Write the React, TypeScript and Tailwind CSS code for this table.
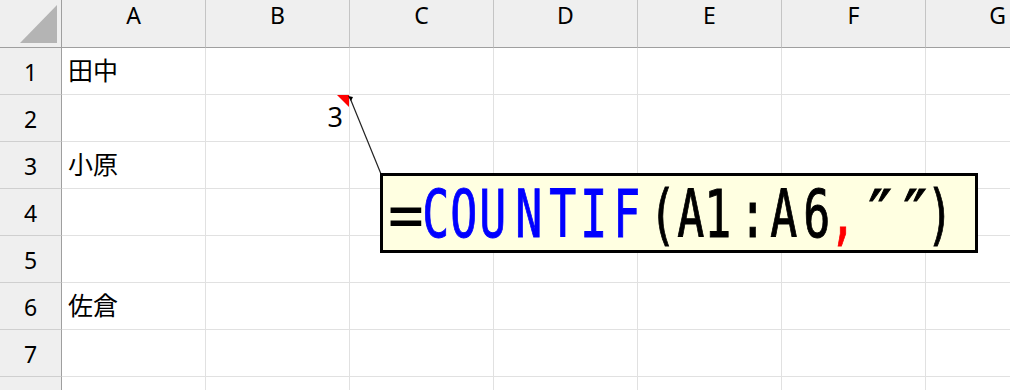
import React from "react";

const cols = ["A", "B", "C", "D", "E", "F", "G"];
const rows = [1, 2, 3, 4, 5, 6, 7, 8];

const cellText: Record<string, string> = { A1: "田中", A3: "小原", A6: "佐倉" };

type Ch = { c: string; color: string; ml: string; sx: string; font?: string };
const chars: Ch[] = [
  { c: "=", color: "text-black", ml: "ml-[5px]", sx: "scale-x-[0.9] [-webkit-text-stroke-width:0px]" },
  { c: "C", color: "text-[#0000ff]", ml: "ml-[8px]", sx: "scale-x-[0.68]" },
  { c: "O", color: "text-[#0000ff]", ml: "ml-[6px]", sx: "scale-x-[0.68]" },
  { c: "U", color: "text-[#0000ff]", ml: "ml-[7px]", sx: "scale-x-[0.68]" },
  { c: "N", color: "text-[#0000ff]", ml: "ml-[14px]", sx: "scale-x-[0.68]" },
  { c: "T", color: "text-[#0000ff]", ml: "ml-[12px]", sx: "scale-x-[0.68]" },
  { c: "I", color: "text-[#0000ff]", ml: "ml-[9px]", sx: "scale-x-[0.68]" },
  { c: "F", color: "text-[#0000ff]", ml: "ml-[11px]", sx: "scale-x-[0.68]" },
  { c: "(", color: "text-black", ml: "ml-[14px]", sx: "scale-x-[0.68]" },
  { c: "A", color: "text-black", ml: "ml-[6px]", sx: "scale-x-[0.68]" },
  { c: "1", color: "text-black", ml: "ml-[5px]", sx: "scale-x-[0.68]" },
  { c: ":", color: "text-black", ml: "ml-[13px]", sx: "scale-x-[0.68]" },
  { c: "A", color: "text-black", ml: "ml-[9px]", sx: "scale-x-[0.68]" },
  { c: "6", color: "text-black", ml: "ml-[11px]", sx: "scale-x-[0.68]" },
  { c: ",", color: "text-[#ff0000]", ml: "ml-[4px]", sx: "scale-x-[0.68]" },
  { c: "″", color: "text-black", ml: "ml-[15px]", sx: "scale-x-[0.95]", font: "font-['DejaVu_Sans',sans-serif]" },
  { c: "″", color: "text-black", ml: "ml-[13px]", sx: "scale-x-[0.95]", font: "font-['DejaVu_Sans',sans-serif]" },
  { c: ")", color: "text-black", ml: "ml-[3px]", sx: "scale-x-[0.68]" },
];

export default function App() {
  return (
    <div className="relative w-[1010px] h-[390px] overflow-hidden bg-white">
      <div className="grid grid-cols-[62px_repeat(7,144px)] grid-rows-[48px_repeat(8,47px)]">
        {/* corner */}
        <div className="relative bg-[#efefef] border-r border-b border-[#9f9f9f]">
          <svg className="absolute left-0 top-0" width="61" height="47" viewBox="0 0 61 47">
            <polygon points="20,43 57,43 57,5" fill="#b4b4b4" />
          </svg>
        </div>
        {cols.map((c) => (
          <div
            key={c}
            className="flex justify-center pt-[4px] bg-[#efefef] border-r border-r-[#c4c4c4] border-b border-b-[#9f9f9f] font-['Noto_Sans',sans-serif] text-[23px] leading-none text-black"
          >
            {c}
          </div>
        ))}
        {rows.map((r) => (
          <React.Fragment key={r}>
            <div className="flex justify-center pt-[13px] bg-[#efefef] border-r border-r-[#9f9f9f] border-b border-b-[#cfcfcf] font-['Noto_Sans',sans-serif] text-[23px] leading-none text-black">
              {r < 8 ? r : null}
            </div>
            {cols.map((c) => {
              const id = `${c}${r}`;
              const t = cellText[id];
              if (id === "B2") {
                return (
                  <div key={id} className="relative flex items-start justify-end pr-[6px] pt-[8px] border-r border-b border-[#e1e1e1]">
                    <span className="font-['Noto_Sans',sans-serif] text-[27px] leading-none text-black">3</span>
                    <svg className="absolute right-0 top-0" width="12" height="12" viewBox="0 0 12 12">
                      <polygon points="0,0 12,0 12,12" fill="#ff0000" />
                    </svg>
                  </div>
                );
              }
              return (
                <div key={id} className="flex items-start pl-[6px] pt-[9px] border-r border-b border-[#e1e1e1]">
                  {t && (
                    <span className="font-['Noto_Sans_CJK_JP',sans-serif] text-[25px] leading-none text-black">{t}</span>
                  )}
                </div>
              );
            })}
          </React.Fragment>
        ))}
      </div>

      {/* connector line */}
      <svg className="absolute left-[345px] top-[92px]" width="40" height="85" viewBox="0 0 40 85">
        <line x1="5" y1="6" x2="36" y2="82" stroke="#222" strokeWidth="1.2" />
        <polygon points="3,4 8,5 6,9" fill="#000" />
      </svg>

      {/* comment box */}
      <div className="absolute left-[380px] top-[173px] w-[598px] h-[80px] border-[3px] border-black bg-[#ffffe1] pl-[7px] pt-[6px]">
        <div className="flex items-baseline font-['DejaVu_Sans_Mono',monospace] text-[66px] leading-none [-webkit-text-stroke-width:1px]">
          {chars.map((ch, i) => (
            <span key={i} className={`flex justify-center w-[22px] shrink-0 ${ch.ml} ${ch.color}`}>
              <span className={`inline-block shrink-0 ${ch.sx} ${ch.font ?? ""}`}>{ch.c}</span>
            </span>
          ))}
        </div>
      </div>
    </div>
  );
}
